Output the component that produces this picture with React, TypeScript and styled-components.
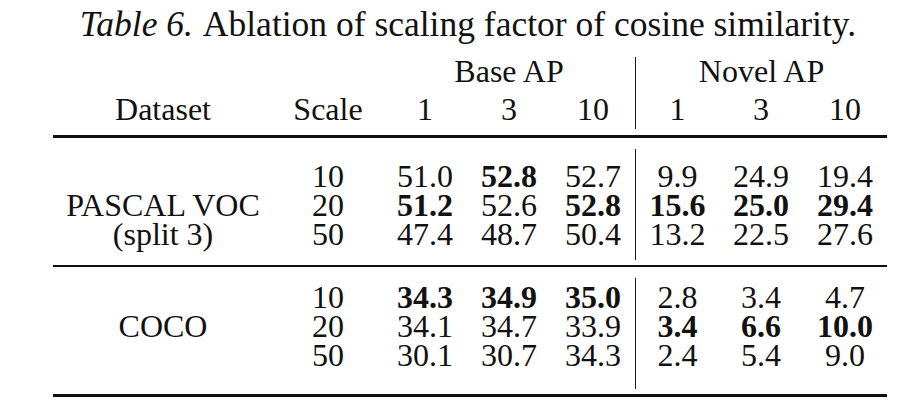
import styled, { createGlobalStyle } from 'styled-components';

const GlobalStyle = createGlobalStyle`
  html, body {
    margin: 0;
    padding: 0;
    background: #ffffff;
  }

  body {
    font-family: "Liberation Serif", "Times New Roman", serif;
    color: #111111;
  }
`;

const Page = styled.div`
  width: 834px;
  padding-top: 4px;
  padding-left: 53px;
`;

const Caption = styled.div`
  padding-right: 4px;

  font-size: 35.5px;
  line-height: 40px;
  text-align: center;
  white-space: nowrap;
`;

const CaptionLabel = styled.em`
  margin-right: 3px;
  font-style: italic;
`;

const Table = styled.div`
  display: grid;
  grid-template-columns: 220px 110px repeat(6, 84px);
  margin-top: 13px;
`;

const Cell = styled.div<{
  $bold?: boolean;
  $divider?: boolean;
  $span?: number;
  $padTop?: number;
  $padBottom?: number;
}>`
  grid-column: ${({ $span }) => ($span ? `span ${$span}` : 'auto')};
  padding-top: ${({ $padTop }) => $padTop ?? 0}px;
  padding-bottom: ${({ $padBottom }) => $padBottom ?? 0}px;

  font-size: 32px;
  font-weight: ${({ $bold }) => ($bold ? 700 : 400)};
  line-height: 29px;
  text-align: center;
  white-space: nowrap;

  border-left: ${({ $divider }) => ($divider ? '1.5px solid #1a1a1a' : 'none')};
`;

const HeadCell = styled(Cell)<{ $upper?: boolean }>`
  height: 36px;
  line-height: ${({ $upper }) => ($upper ? '28px' : '32px')};
`;

const Rule = styled.div<{ $thick?: boolean }>`
  grid-column: 1 / -1;
  height: ${({ $thick }) => ($thick ? '3px' : '2px')};
  margin-top: ${({ $thick }) => ($thick ? '6px' : '5px')};
  margin-bottom: 11px;

  background: #111111;

  &:last-child {
    margin-top: 5px;
    margin-bottom: 0;
  }
`;

type Row = {
  dataset: string;
  scale: string;
  values: string[];
  bold: boolean[];
};

const pascal: Row[] = [
  { dataset: '', scale: '10', values: ['51.0', '52.8', '52.7', '9.9', '24.9', '19.4'], bold: [false, true, false, false, false, false] },
  { dataset: 'PASCAL VOC', scale: '20', values: ['51.2', '52.6', '52.8', '15.6', '25.0', '29.4'], bold: [true, false, true, true, true, true] },
  { dataset: '(split 3)', scale: '50', values: ['47.4', '48.7', '50.4', '13.2', '22.5', '27.6'], bold: [false, false, false, false, false, false] },
];

const coco: Row[] = [
  { dataset: '', scale: '10', values: ['34.3', '34.9', '35.0', '2.8', '3.4', '4.7'], bold: [true, true, true, false, false, false] },
  { dataset: 'COCO', scale: '20', values: ['34.1', '34.7', '33.9', '3.4', '6.6', '10.0'], bold: [false, false, false, true, true, true] },
  { dataset: '', scale: '50', values: ['30.1', '30.7', '34.3', '2.4', '5.4', '9.0'], bold: [false, false, false, false, false, false] },
];

function DataRows({ rows, group, padTop, padBottom }: { rows: Row[]; group: string; padTop: number; padBottom: number }) {
  return (
    <>
      {rows.map((row, i) => {
        const top = i === 0 ? padTop : 0;
        const bottom = i === rows.length - 1 ? padBottom : 0;
        return [
          <Cell key={`${group}-${i}-d`} $padTop={top} $padBottom={bottom}>{row.dataset}</Cell>,
          <Cell key={`${group}-${i}-s`} $padTop={top} $padBottom={bottom}>{row.scale}</Cell>,
          ...row.values.map((v, j) => (
            <Cell
              key={`${group}-${i}-${j}`}
              $bold={row.bold[j]}
              $divider={j === 3}
              $padTop={top}
              $padBottom={bottom}
            >
              {v}
            </Cell>
          )),
        ];
      })}
    </>
  );
}

export default function App() {
  return (
    <>
      <GlobalStyle />
      <Page>
        <Caption>
          <CaptionLabel>Table 6.</CaptionLabel> Ablation of scaling factor of cosine similarity.
        </Caption>
        <Table>
          <HeadCell $upper $span={2} />
          <HeadCell $upper $span={3}>Base AP</HeadCell>
          <HeadCell $upper $span={3} $divider>Novel AP</HeadCell>

          <HeadCell>Dataset</HeadCell>
          <HeadCell>Scale</HeadCell>
          <HeadCell>1</HeadCell>
          <HeadCell>3</HeadCell>
          <HeadCell>10</HeadCell>
          <HeadCell $divider>1</HeadCell>
          <HeadCell>3</HeadCell>
          <HeadCell>10</HeadCell>

          <Rule $thick />
          <DataRows rows={pascal} group="voc" padTop={12.5} padBottom={11.5} />
          <Rule />
          <DataRows rows={coco} group="coco" padTop={4.5} padBottom={19.5} />
          <Rule $thick />
        </Table>
      </Page>
    </>
  );
}
